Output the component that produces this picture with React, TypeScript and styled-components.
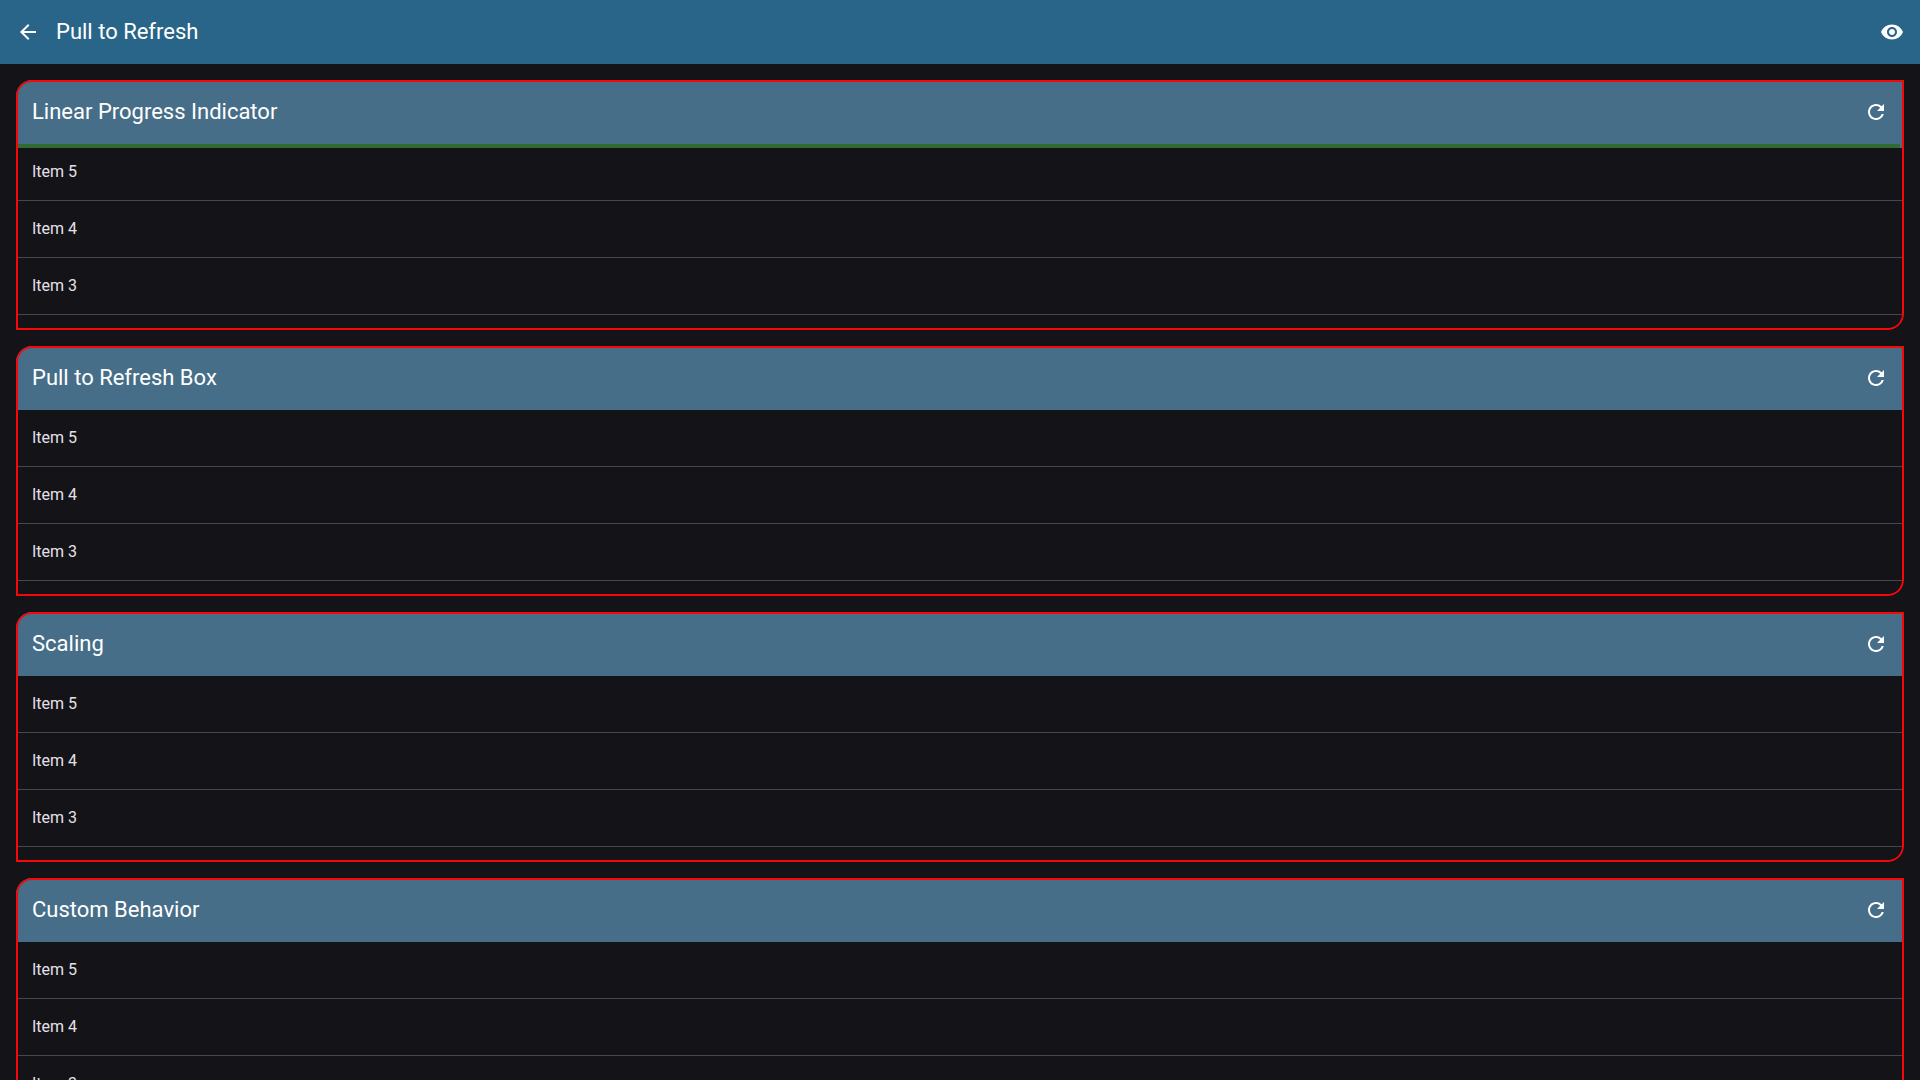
import React from "react";
import styled, { createGlobalStyle } from "styled-components";
import { MdArrowBack, MdRefresh, MdVisibility } from "react-icons/md";

const GlobalStyle = createGlobalStyle`
  *, *::before, *::after { box-sizing: border-box; }
  body {
    margin: 0;
    background: #141318;
    color: #e5e1e9;
    font-family: Roboto, "Noto Sans", sans-serif;
  }
`;

const Screen = styled.div`
  display: flex;
  flex-direction: column;
  height: 100vh;
`;

const TopBar = styled.header`
  display: flex;
  flex: none;
  align-items: center;
  gap: 16px;
  height: 64px;
  padding: 0 16px;
  background: #296588;
  color: #ffffff;
`;

const Title = styled.h1`
  flex: 1;
  margin: 0;
  font-size: 22px;
  font-weight: 400;
  line-height: 28px;
`;

const IconButton = styled.button`
  display: flex;
  flex: none;
  padding: 0;
  border: 0;
  background: none;
  color: inherit;
  font-size: 24px;
  cursor: pointer;
`;

const Content = styled.main`
  display: flex;
  flex: 1;
  flex-direction: column;
  gap: 16px;
  min-height: 0;
  padding: 16px;
  overflow-y: auto;
  scrollbar-width: none;
`;

const Card = styled.section`
  position: relative;
  display: flex;
  flex: none;
  flex-direction: column;
  height: 250px;
  border-radius: 16px 0;
  overflow: hidden;

  &::after {
    content: "";
    position: absolute;
    inset: 0;
    border: 2px solid #f80608;
    border-radius: inherit;
    pointer-events: none;
  }
`;

const CardHeader = styled.div`
  display: flex;
  flex: none;
  align-items: center;
  height: 64px;
  padding: 0 16px;
  background: #466e88;
  color: #ffffff;
`;

const CardTitle = styled(Title).attrs({ as: "h2" })``;

const CardBody = styled.div`
  position: relative;
  flex: 1;
  min-height: 0;
`;

const Progress = styled.div`
  position: absolute;
  inset: 0 0 auto;
  height: 4px;
  border-right: 4px solid #466e88;
  background: #316a32;
`;

const List = styled.ul`
  height: 100%;
  margin: 0;
  padding: 0;
  list-style: none;
  overflow-y: auto;
  scrollbar-width: none;
`;

const Item = styled.li`
  display: flex;
  align-items: center;
  height: 57px;
  padding: 0 16px;
  border-bottom: 1px solid #47464f;
  font-size: 16px;
  line-height: 24px;
`;

const sections = [
  { title: "Linear Progress Indicator", progress: true },
  { title: "Pull to Refresh Box", progress: false },
  { title: "Scaling", progress: false },
  { title: "Custom Behavior", progress: false },
];

const items = [5, 4, 3, 2, 1];

export default function App() {
  return (
    <Screen>
      <GlobalStyle />
      <TopBar>
        <IconButton type="button" aria-label="Back">
          <MdArrowBack />
        </IconButton>
        <Title>Pull to Refresh</Title>
        <IconButton type="button" aria-label="Toggle visibility">
          <MdVisibility />
        </IconButton>
      </TopBar>
      <Content>
        {sections.map(({ title, progress }) => (
          <Card key={title} aria-label={title}>
            <CardHeader>
              <CardTitle>{title}</CardTitle>
              <IconButton type="button" aria-label={`Refresh ${title}`}>
                <MdRefresh />
              </IconButton>
            </CardHeader>
            <CardBody>
              <List>
                {items.map((n) => (
                  <Item key={n}>{`Item ${n}`}</Item>
                ))}
              </List>
              {progress && <Progress role="progressbar" aria-label="Refreshing" />}
            </CardBody>
          </Card>
        ))}
      </Content>
    </Screen>
  );
}
